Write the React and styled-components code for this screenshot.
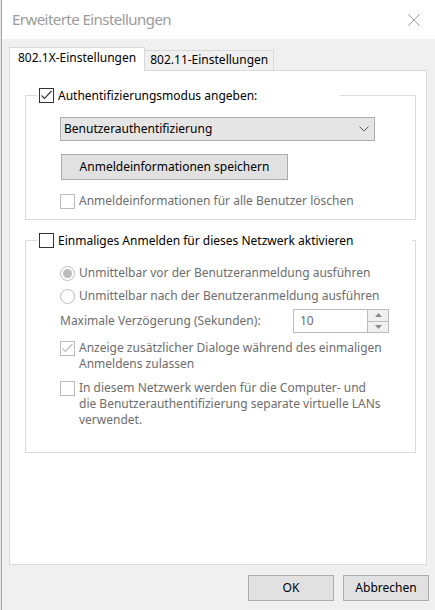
import React from 'react'
import styled, { createGlobalStyle } from 'styled-components'

const GlobalStyle = createGlobalStyle`
  * { box-sizing: border-box; }
  html, body {
    margin: 0;
    padding: 0;
    background: #e4e4e4;
  }
  body {
    font-family: 'Noto Sans', 'Open Sans', sans-serif;
    font-size: 12px;
    line-height: 16px;
    color: #000;
  }
`

const CheckMark = ({ color }) => (
  <svg width='13' height='13' viewBox='0 0 13 13'>
    <polyline points='1.5,6.5 4.5,9.5 11.5,2' fill='none' stroke={color} strokeWidth='1.1' />
  </svg>
)

const Chevron = () => (
  <svg width='10' height='6' viewBox='0 0 10 6'>
    <polyline points='0.5,0.5 5,5 9.5,0.5' fill='none' stroke='#5a5a5a' strokeWidth='1' />
  </svg>
)

const CloseIcon = () => (
  <svg width='12' height='12' viewBox='0 0 12 12'>
    <path d='M0.5 0.5 L11.5 11.5 M11.5 0.5 L0.5 11.5' stroke='#9a9a9a' strokeWidth='1' />
  </svg>
)

const Arrow = ({ up }) => (
  <svg width='7' height='4' viewBox='0 0 7 4'>
    <polygon points={up ? '0,4 3.5,0 7,4' : '0,0 3.5,4 7,0'} fill='#8a8a8a' />
  </svg>
)

const Check = ({ checked, disabled }) => (
  <CheckBox $disabled={disabled}>
    {checked && <CheckMark color={disabled ? '#bcbcbc' : '#333'} />}
  </CheckBox>
)

const App = () => {
  return (
    <Frame>
      <GlobalStyle />
      <TitleBar>
        <Title>Erweiterte Einstellungen</Title>
        <CloseIcon />
      </TitleBar>
      <Body>
        <TabStrip>
          <Tab $active>802.1X-Einstellungen</Tab>
          <Tab>802.11-Einstellungen</Tab>
        </TabStrip>
        <Panel>
          <Group>
            <Legend $width={303}>
              <Check checked />
              <span>Authentifizierungsmodus angeben:</span>
            </Legend>
            <GroupBody $top={14} $bottom={10} $gap={13}>
              <Select>
                <span>Benutzerauthentifizierung</span>
                <Chevron />
              </Select>
              <PushButton type='button'>Anmeldeinformationen speichern</PushButton>
              <Row>
                <Check disabled />
                <Label $disabled>Anmeldeinformationen für alle Benutzer löschen</Label>
              </Row>
            </GroupBody>
          </Group>

          <Group $spaced>
            <Legend $width={375}>
              <Check />
              <span>Einmaliges Anmelden für dieses Netzwerk aktivieren</span>
            </Legend>
            <GroupBody $top={17} $bottom={24} $gap={7}>
              <Row>
                <Radio $selected />
                <Label $disabled>Unmittelbar vor der Benutzeranmeldung ausführen</Label>
              </Row>
              <Row>
                <Radio />
                <Label $disabled>Unmittelbar nach der Benutzeranmeldung ausführen</Label>
              </Row>
              <DelayRow>
                <Label $disabled>Maximale Verzögerung (Sekunden):</Label>
                <SpinBox>
                  <SpinText>10</SpinText>
                  <SpinButtons>
                    <SpinButton><Arrow up /></SpinButton>
                    <SpinButton><Arrow /></SpinButton>
                  </SpinButtons>
                </SpinBox>
              </DelayRow>
              <Row>
                <Check checked disabled />
                <Label $disabled>
                  Anzeige zusätzlicher Dialoge während des einmaligen<br />
                  Anmeldens zulassen
                </Label>
              </Row>
              <Row $push={1}>
                <Check disabled />
                <Label $disabled>
                  In diesem Netzwerk werden für die Computer- und<br />
                  die Benutzerauthentifizierung separate virtuelle LANs<br />
                  verwendet.
                </Label>
              </Row>
            </GroupBody>
          </Group>
        </Panel>
      </Body>
      <Footer>
        <DialogButton type='button'>OK</DialogButton>
        <DialogButton type='button'>Abbrechen</DialogButton>
      </Footer>
    </Frame>
  )
}

const Frame = styled.div`
  width: 434px;
  height: 610px;
  margin-left: 1px;
  border-left: 1px solid #a6a6a6;
  background: #f0f0f0;
  display: flex;
  flex-direction: column;
`
const TitleBar = styled.div`
  height: 39px;
  background: #fff;
  display: flex;
  align-items: center;
  justify-content: space-between;
  padding: 0 15px 0 10px;
`
const Title = styled.div`
  font-size: 15px;
  letter-spacing: -0.55px;
  color: #9b9b9b;
  padding-bottom: 1px;
`
const Body = styled.div`
  flex: 1;
  display: flex;
  flex-direction: column;
  padding: 8px 8px 0 7px;
`
const TabStrip = styled.div`
  display: flex;
  align-items: flex-end;
  height: 24px;
  margin-bottom: -1px;
  position: relative;
  z-index: 1;
`
const Tab = styled.div`
  height: ${(p) => (p.$active ? '24px' : '21px')};
  padding: ${(p) => (p.$active ? '2px 8px 0 8px' : '1px 5px 0 5px')};
  background: ${(p) => (p.$active ? '#fff' : '#f0f0f0')};
  border: 1px solid #d9d9d9;
  border-bottom: ${(p) => (p.$active ? 'none' : '1px solid #d9d9d9')};
  border-left: ${(p) => (p.$active ? '1px solid #d9d9d9' : 'none')};
  white-space: nowrap;
`
const Panel = styled.div`
  flex: 1;
  background: #fff;
  border: 1px solid #d9d9d9;
  padding: 16px 10px 0 15px;
`
const Group = styled.fieldset`
  margin: ${(p) => (p.$spaced ? '12px' : '0')} 0 0 0;
  padding: 0;
  min-width: 0;
  border: 1px solid #dcdcdc;
`
const Legend = styled.legend`
  width: ${(p) => p.$width}px;
  margin-left: 11px;
  padding: 0 2px;
  display: flex;
  align-items: center;
  gap: 4px;
  line-height: 15px;
  white-space: nowrap;
`
const GroupBody = styled.div`
  display: flex;
  flex-direction: column;
  align-items: flex-start;
  gap: ${(p) => p.$gap}px;
  padding: ${(p) => p.$top}px 10px ${(p) => p.$bottom}px 34px;
`
const Row = styled.div`
  display: flex;
  align-items: flex-start;
  gap: 4px;
  margin-top: ${(p) => p.$push || 0}px;
`
const DelayRow = styled.div`
  display: grid;
  grid-template-columns: 233px 96px;
  align-items: center;
  margin-top: -2px;
`
const Label = styled.div`
  color: ${(p) => (p.$disabled ? '#6d6d6d' : '#000')};
  white-space: nowrap;
`
const CheckBox = styled.div`
  width: 15px;
  height: 15px;
  flex: none;
  margin-top: 1px;
  background: #fff;
  border: 1px solid ${(p) => (p.$disabled ? '#bcbcbc' : '#333')};
  display: flex;
  align-items: center;
  justify-content: center;
`
const Radio = styled.div`
  width: 15px;
  height: 15px;
  flex: none;
  margin-top: 0.5px;
  border-radius: 50%;
  border: 1px solid #bcbcbc;
  background: #fff;
  display: flex;
  align-items: center;
  justify-content: center;
  &::after {
    content: '';
    width: 9px;
    height: 9px;
    border-radius: 50%;
    background: ${(p) => (p.$selected ? '#bcbcbc' : 'transparent')};
  }
`
const Select = styled.div`
  width: 315px;
  height: 24px;
  background: #e5e5e5;
  border: 1px solid #adadad;
  display: flex;
  align-items: center;
  justify-content: space-between;
  padding: 0 5px 0 3px;
`
const PushButton = styled.button`
  margin-left: 1px;
  width: 227px;
  height: 26px;
  background: #e1e1e1;
  border: 1px solid #adadad;
  font: inherit;
  color: #000;
  padding: 0;
`
const SpinBox = styled.div`
  height: 24px;
  display: flex;
  background: #fff;
  border: 1px solid #bcbcbc;
`
const SpinText = styled.div`
  flex: 1;
  padding-left: 6px;
  display: flex;
  align-items: center;
  color: #6d6d6d;
`
const SpinButtons = styled.div`
  width: 21px;
  display: flex;
  flex-direction: column;
  border-left: 1px solid #bcbcbc;
`
const SpinButton = styled.div`
  flex: 1;
  background: #f0f0f0;
  display: flex;
  align-items: center;
  justify-content: center;
  & + & {
    border-top: 1px solid #bcbcbc;
  }
`
const Footer = styled.div`
  display: flex;
  justify-content: flex-end;
  gap: 9px;
  padding: 10px 6px 9px 0;
`
const DialogButton = styled.button`
  width: 86px;
  height: 26px;
  background: #e1e1e1;
  border: 1px solid #adadad;
  font: inherit;
  color: #000;
  padding: 0;
`

export default App
